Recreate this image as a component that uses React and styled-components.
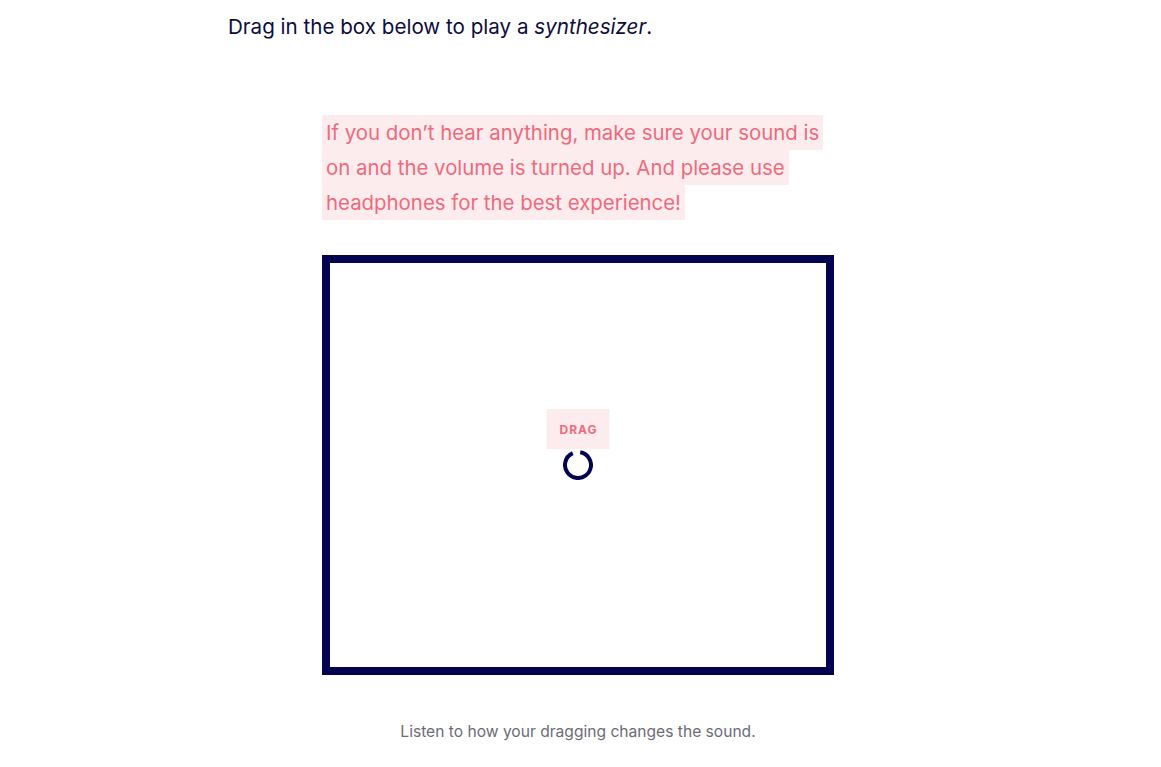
import React from 'react';
import styled, { createGlobalStyle } from 'styled-components';

const GlobalStyle = createGlobalStyle`
  html, body {
    margin: 0;
    padding: 0;
    background: #ffffff;
  }
  body {
    font-family: Inter, "Noto Sans", sans-serif;
    -webkit-font-smoothing: antialiased;
  }
`;

// --- page column ---
const Article = styled.article`
  width: 705px;
  margin: 0 auto;
  padding-top: 13px;
`;

const Lead = styled.p`
  margin: 0;
  font-size: 20.6px;
  line-height: 28px;
  color: #0d0c3d;
  em { font-style: italic; }
`;

const Demo = styled.figure`
  margin: 74px 0 0 94px;
  width: 512px;
  display: flex;
  flex-direction: column;
  align-items: stretch;
`;

// pink warning, highlighted line by line
const Note = styled.p`
  margin: 0 0 35px;
  font-size: 20.4px;
  line-height: 35px;
  color: #ee6a7c;
  span {
    background: #fdecee;
    padding: 5px 4px 5px 4px;
    -webkit-box-decoration-break: clone;
    box-decoration-break: clone;
  }
`;

const Pad = styled.div`
  box-sizing: border-box;
  width: 512px;
  height: 420px;
  border: 8px solid #03034f;
  display: flex;
  align-items: center;
  justify-content: center;
  cursor: grab;
`;

const Handle = styled.div`
  position: relative;
  display: flex;
  width: 30px;
  height: 30px;
`;

const Tag = styled.div`
  position: absolute;
  left: 50%;
  bottom: 100%;
  transform: translateX(-50%);
  margin-bottom: 1px;
  background: #fdecee;
  color: #ee6a7c;
  font-size: 12px;
  font-weight: 700;
  letter-spacing: 1px;
  padding: 13px 12px 12px 13px;
  line-height: 15px;
`;

const Caption = styled.figcaption`
  margin-top: 47px;
  text-align: center;
  font-size: 15.6px;
  line-height: 20px;
  color: #6c6c78;
`;

function Ring() {
  const r = 13;
  const c = 2 * Math.PI * r;
  const gap = c * 0.1;
  return (
    <svg width="30" height="30" viewBox="0 0 30 30">
      <circle
        cx="15"
        cy="15"
        r={r}
        fill="none"
        stroke="#03034f"
        strokeWidth="4"
        strokeDasharray={`${c - gap} ${gap}`}
        transform="rotate(-80 15 15)"
      />
    </svg>
  );
}

export default function App() {
  return (
    <>
      <GlobalStyle />
      <Article>
        <Lead>
          Drag in the box below to play a <em>synthesizer</em>.
        </Lead>
        <Demo>
          <Note>
            <span>
              If you don’t hear anything, make sure your sound is on and the volume is
              turned up. And please use headphones for the best experience!
            </span>
          </Note>
          <Pad>
            <Handle>
              <Tag>DRAG</Tag>
              <Ring />
            </Handle>
          </Pad>
          <Caption>Listen to how your dragging changes the sound.</Caption>
        </Demo>
      </Article>
    </>
  );
}
